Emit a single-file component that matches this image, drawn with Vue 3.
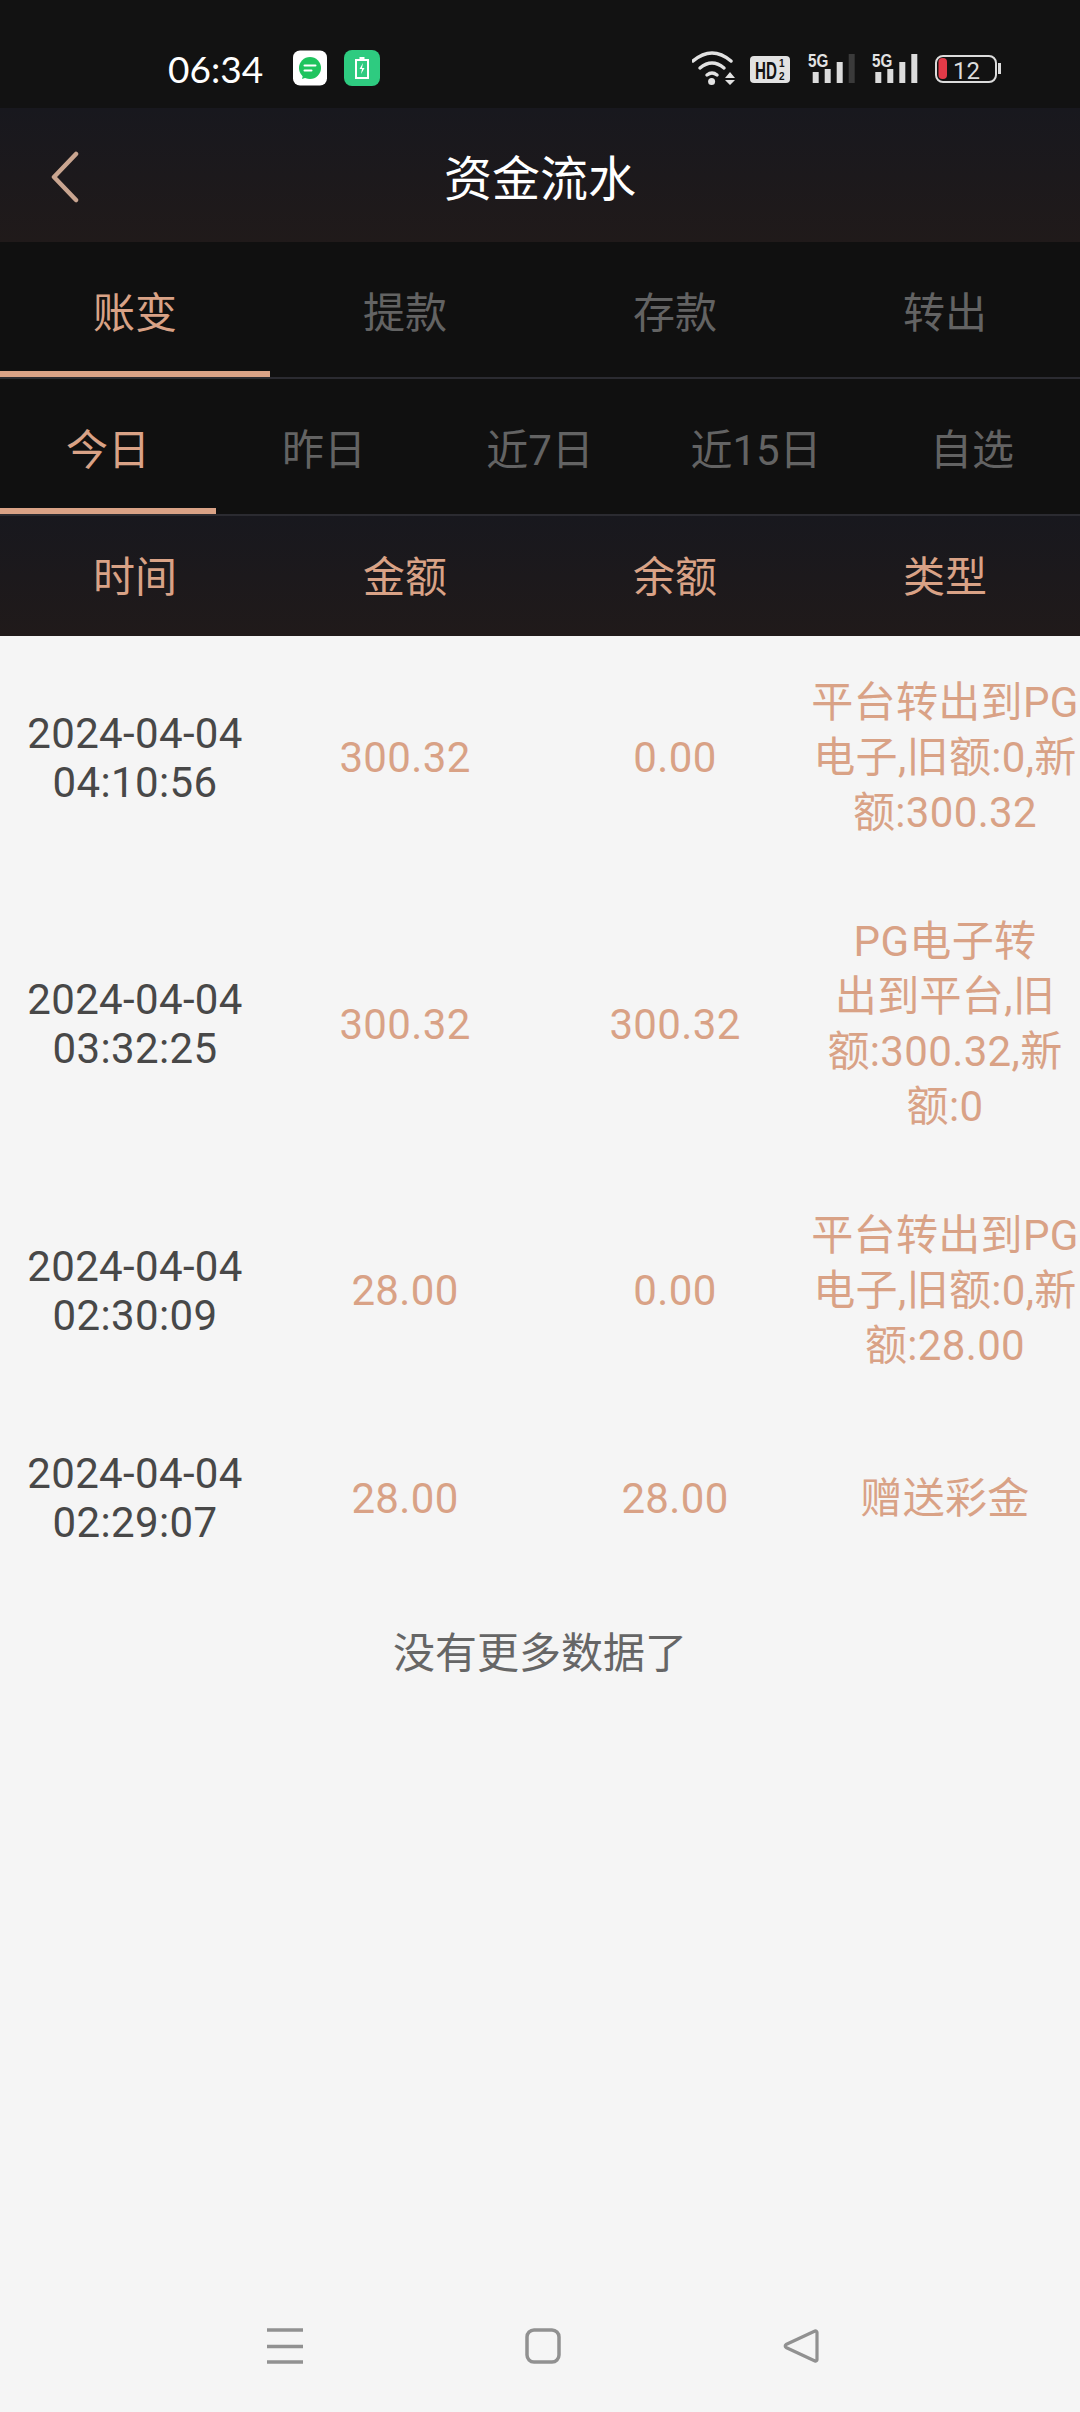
<script setup>
const mainTabs = ['账变', '提款', '存款', '转出']
const dayTabs = ['今日', '昨日', '近7日', '近15日', '自选']
const heads = ['时间', '金额', '余额', '类型']
const rows = [
  { date: '2024-04-04', time: '04:10:56', amount: '300.32', balance: '0.00', type: ['平台转出到PG', '电子,旧额:0,新', '额:300.32'] },
  { date: '2024-04-04', time: '03:32:25', amount: '300.32', balance: '300.32', type: ['PG电子转', '出到平台,旧', '额:300.32,新', '额:0'] },
  { date: '2024-04-04', time: '02:30:09', amount: '28.00', balance: '0.00', type: ['平台转出到PG', '电子,旧额:0,新', '额:28.00'] },
  { date: '2024-04-04', time: '02:29:07', amount: '28.00', balance: '28.00', type: ['赠送彩金'] }
]
const signals = [
  { label: 116, bar: 120.7, last: '#3a3a3a' },
  { label: 180, bar: 183.3, last: '#dcdcdc' }
]
</script>

<template>
  <div class="page">
    <div class="status">
      <span class="clock">06:34</span>
      <svg width="34" height="36" viewBox="0 0 34 36">
        <rect y="0.500" width="34" height="35" rx="7" fill="#fff" />
        <circle cx="17" cy="18" r="11" fill="#1fc45e" />
        <path d="M10 25l-1 4 6-2z" fill="#1fc45e" />
        <path d="M11.500 15.500h11M11.500 20.500h7" stroke="#fff" stroke-width="2" stroke-linecap="round" />
      </svg>
      <svg class="second" width="36" height="36" viewBox="0 0 36 36">
        <rect width="36" height="36" rx="8" fill="#2ecb80" />
        <path d="M12 10h12v18h-12z" fill="none" stroke="#fff" stroke-width="2" />
        <path d="M15.500 7h5v2h-5z" fill="#fff" />
        <path d="M19 13l-3.500 6h2.500l-1 5 3.500-6h-2.500z" fill="#fff" />
      </svg>
      <svg class="sys" width="310" height="36" viewBox="0 0 310 36">
        <g fill="none" stroke="#e2e2e2" stroke-width="3.500" stroke-linecap="round">
          <path d="M1 11Q20-5 39 11" />
          <path d="M8 18Q20 8 32 18" />
          <path d="M15 25Q20 21 25 25" />
        </g>
        <circle cx="19.600" cy="31.500" r="3.500" fill="#e2e2e2" />
        <path d="M38 22l5 6h-10zM38 35l5-5h-10z" fill="#e2e2e2" />
        <rect x="58" y="6" width="40" height="27" rx="4" fill="#e2e2e2" />
        <text transform="translate(63 29) scale(0.66 1)" class="hd">HD</text>
        <text x="87" y="17" class="hd-n">1</text>
        <text x="87" y="30" class="hd-n">2</text>
        <g v-for="s in signals" :key="s.label">
          <text :transform="`translate(${s.label} 17) scale(0.8 1)`" class="five">5G</text>
          <rect :x="s.bar" y="22" width="6" height="11" fill="#dcdcdc" />
          <rect :x="s.bar + 12" y="19" width="6" height="14" fill="#dcdcdc" />
          <rect :x="s.bar + 24" y="12" width="6" height="21" fill="#dcdcdc" />
          <rect :x="s.bar + 36" y="4" width="6" height="29" :fill="s.last" />
        </g>
        <rect x="244" y="6" width="60" height="26" rx="7" fill="none" stroke="#dcdcdc" stroke-width="2" />
        <rect x="246.500" y="8" width="8.500" height="21" rx="4" fill="#e23a48" />
        <text x="261" y="29" class="level">12</text>
        <path d="M306 13h3v11h-3z" fill="#dcdcdc" />
      </svg>
    </div>

    <header class="title-bar band">
      <svg class="back" width="28" height="52" viewBox="0 0 28 52">
        <path d="M25 3L3 26l22 23" fill="none" stroke="#c9a590" stroke-width="4.500" stroke-linecap="round" stroke-linejoin="round" />
      </svg>
      <h1>资金流水</h1>
    </header>

    <nav class="tabs">
      <div v-for="(t, i) in mainTabs" :key="t" class="tab" :class="{ on: i === 0 }">{{ t }}</div>
    </nav>
    <nav class="tabs">
      <div v-for="(t, i) in dayTabs" :key="t" class="tab" :class="{ on: i === 0 }">{{ t }}</div>
    </nav>

    <div class="heads band">
      <div v-for="h in heads" :key="h">{{ h }}</div>
    </div>

    <main class="list">
      <div v-for="r in rows" :key="r.time" class="row">
        <div class="when">{{ r.date }}<br />{{ r.time }}</div>
        <div>{{ r.amount }}</div>
        <div>{{ r.balance }}</div>
        <div class="kind">
          <div v-for="line in r.type" :key="line">{{ line }}</div>
        </div>
      </div>
      <p class="end">没有更多数据了</p>
    </main>

    <footer class="nav">
      <svg width="36" height="36" viewBox="0 0 36 36">
        <path d="M0 2h36M0 18.500h36M0 34h36" stroke="#919191" stroke-width="3.500" />
      </svg>
      <svg width="36" height="36" viewBox="0 0 36 36">
        <rect x="2" y="2" width="32" height="32" rx="7" fill="none" stroke="#919191" stroke-width="3.500" />
      </svg>
      <svg width="36" height="36" viewBox="0 0 36 36">
        <path d="M32 3L3 16.500a1.800 1.800 0 0 0 0 3L32 33a1.500 1.500 0 0 0 2-1.500V4.500A1.500 1.500 0 0 0 32 3z" fill="none" stroke="#919191" stroke-width="3.200" stroke-linejoin="round" />
      </svg>
    </footer>
  </div>
</template>

<style scoped>
.page {
  display: flex;
  flex-direction: column;
  width: 1080px;
  height: 2412px;
  overflow: hidden;
  background: #f5f5f5;
  font-family: Roboto, "Noto Sans CJK SC", sans-serif;
  font-size: 42px;
}
.status {
  display: flex;
  align-items: center;
  flex: none;
  height: 108px;
  box-sizing: border-box;
  padding: 28px 0 0 168px;
  background: #121212;
}
.clock {
  width: 125px;
  color: #fff;
  font-family: Lato, sans-serif;
  font-size: 37px;
}
.second {
  margin-left: 17px;
}
.sys {
  margin-left: 312px;
}
.hd {
  font: 700 23px "Liberation Sans", sans-serif;
  fill: #121212;
}
.hd-n {
  font: 700 10px "Liberation Sans", sans-serif;
  fill: #121212;
}
.five {
  font: 700 19px "Liberation Sans", sans-serif;
  fill: #e2e2e2;
}
.level {
  font: 400 24px Roboto, sans-serif;
  fill: #dcdcdc;
}
.band {
  background: linear-gradient(180deg, #18181e, #201a1a);
}
.title-bar {
  position: relative;
  display: flex;
  align-items: center;
  justify-content: center;
  flex: none;
  height: 134px;
}
.back {
  position: absolute;
  left: 51px;
  top: 43px;
}
.title-bar h1 {
  margin: 0;
  color: #fff;
  font-size: 48px;
  font-weight: 400;
}
.tabs {
  display: flex;
  flex: none;
  height: 137px;
  box-sizing: border-box;
  border-bottom: 2px solid #2b2b31;
  background: #101010;
}
.tab {
  position: relative;
  display: flex;
  align-items: center;
  justify-content: center;
  flex: 1;
  color: #636363;
}
.tab.on {
  color: #d9a286;
}
.tab.on::after {
  content: "";
  position: absolute;
  left: 0;
  right: 0;
  bottom: 0;
  height: 6px;
  background: #d9a286;
}
.heads {
  display: grid;
  grid-template-columns: repeat(4, 270px);
  align-items: center;
  flex: none;
  height: 120px;
  box-sizing: border-box;
  padding-bottom: 5px;
  color: #d9a286;
  text-align: center;
}
.list {
  flex: 1;
  padding-top: 2px;
}
.row {
  display: grid;
  grid-template-columns: repeat(4, 270px);
  align-items: center;
  padding: 37px 0;
  color: #d9a286;
  letter-spacing: 0.35px;
  line-height: 55px;
  text-align: center;
}
.row:nth-child(4) {
  padding-top: 39px;
}
.kind {
  white-space: nowrap;
}
.when {
  color: #484848;
  line-height: 49px;
}
.end {
  margin: 42px 0 0;
  color: #666;
  line-height: 55px;
  text-align: center;
}
.nav {
  display: flex;
  justify-content: center;
  gap: 222px;
  flex: none;
  height: 84px;
  padding-left: 6px;
}
</style>
